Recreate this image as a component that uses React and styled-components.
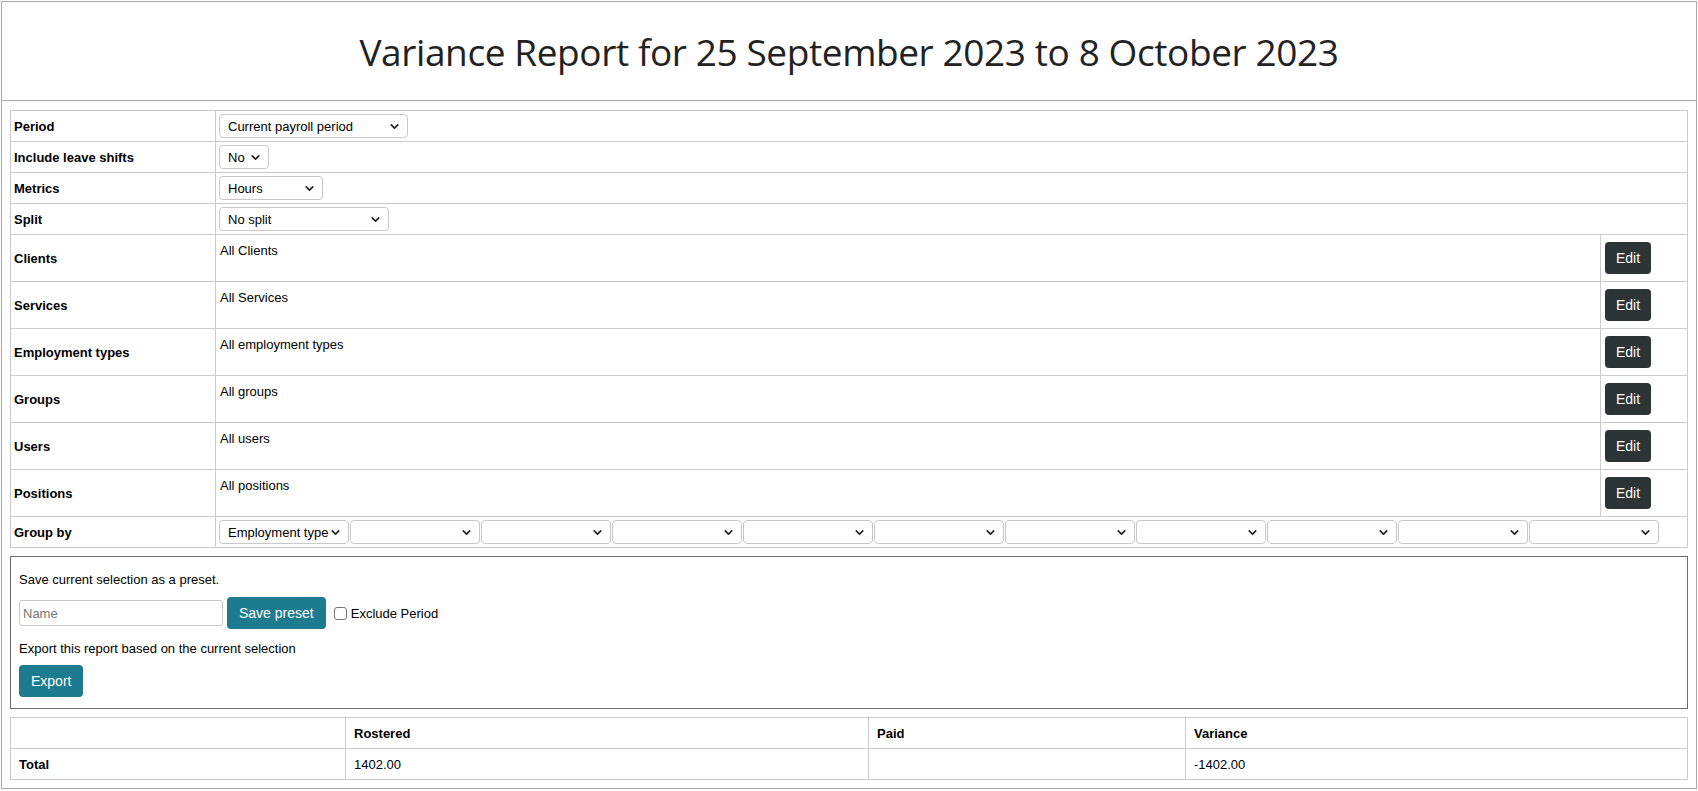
import React from "react";
import styled, { createGlobalStyle } from "styled-components";
import { ChevronDown } from "lucide-react";

const GlobalStyle = createGlobalStyle`
  body {
    margin: 0;
    font-family: "Liberation Sans", Arial, sans-serif;
    font-size: 13px;
    color: #000;
    background: #fff;
  }
`;

const Frame = styled.div`
  margin: 1px;
  border: 1px solid #a9a9a9;
`;

const Header = styled.div`
  height: 98px;
  border-bottom: 1px solid #a9a9a9;
  display: flex;
  align-items: center;
  justify-content: center;
`;

const Title = styled.h1`
  margin: 0;
  font-family: "Open Sans", sans-serif;
  font-weight: 400;
  font-size: 37px;
  letter-spacing: -0.4px;
  color: #222;
`;

const Content = styled.div`
  padding: 9px 8px 8px;
  display: flex;
  flex-direction: column;
  gap: 8px;
`;

const Table = styled.table`
  width: 100%;
  border-collapse: collapse;
  table-layout: fixed;
`;

const Cell = styled.td`
  border: 1px solid #ccc;
  padding: ${props => props.pad || "3px"};
  vertical-align: ${props => (props.top ? "top" : "middle")};
  font-weight: ${props => (props.bold ? 700 : 400)};
  line-height: 15px;
`;

const SelectWrap = styled.span`
  position: relative;
  display: inline-block;
  width: ${props => props.width}px;
  flex: none;
`;

const NativeSelect = styled.select`
  appearance: none;
  width: 100%;
  height: 24px;
  border: 1px solid #c8c8c8;
  border-radius: 4px;
  background: #fff;
  padding: 0 18px 0 8px;
  font-family: "Liberation Sans", Arial, sans-serif;
  font-size: 13px;
  color: #000;
  display: block;
`;

const Chevron = styled(ChevronDown)`
  position: absolute;
  right: 7px;
  top: 6px;
  pointer-events: none;
`;

const Select = ({ width, value }) => (
  <SelectWrap width={width}>
    <NativeSelect defaultValue={value}>
      <option value={value}>{value}</option>
    </NativeSelect>
    <Chevron size={13} strokeWidth={3} color="#222" />
  </SelectWrap>
);

const SelectRow = styled.div`
  display: flex;
  gap: 1px;
`;

const Button = styled.button`
  height: 32px;
  padding: 0 ${props => props.px || 12}px;
  border: none;
  border-radius: 4px;
  background: ${props => (props.dark ? "#2d3436" : "#1d7b8f")};
  color: #fff;
  font-family: "Liberation Sans", Arial, sans-serif;
  font-size: 14px;
  cursor: pointer;
`;

const PresetBox = styled.div`
  border: 1px solid #6b6b6b;
  padding: 15px 8px 11px;
`;

const Line = styled.div`
  line-height: 15px;
`;

const PresetRow = styled.div`
  display: flex;
  align-items: center;
  gap: 4px;
  margin: 10px 0 12px;
`;

const NameInput = styled.input`
  width: 204px;
  height: 26px;
  box-sizing: border-box;
  border: 1px solid #c8c8c8;
  border-radius: 3px;
  padding: 0 3px;
  font-family: "Liberation Sans", Arial, sans-serif;
  font-size: 13px;
  &::placeholder {
    color: #777;
  }
`;

const CheckLabel = styled.label`
  display: flex;
  align-items: center;
  gap: 4px;
  margin-left: 4px;
  font-size: 13px;
`;

const CheckBox = styled.input`
  appearance: none;
  width: 13px;
  height: 13px;
  margin: 0;
  border: 1px solid #767676;
  border-radius: 3px;
  background: #fff;
`;

const ExportWrap = styled.div`
  margin-top: 9px;
`;

const filters = [
  ["Clients", "All Clients"],
  ["Services", "All Services"],
  ["Employment types", "All employment types"],
  ["Groups", "All groups"],
  ["Users", "All users"],
  ["Positions", "All positions"]
];

const App = () => (
  <>
    <GlobalStyle />
    <Frame>
      <Header>
        <Title>Variance Report for 25 September 2023 to 8 October 2023</Title>
      </Header>
      <Content>
        <Table>
          <colgroup>
            <col style={{ width: 205 }} />
            <col />
            <col style={{ width: 87 }} />
          </colgroup>
          <tbody>
            <tr>
              <Cell bold>Period</Cell>
              <Cell colSpan={2}>
                <Select width={189} value="Current payroll period" />
              </Cell>
            </tr>
            <tr>
              <Cell bold>Include leave shifts</Cell>
              <Cell colSpan={2}>
                <Select width={50} value="No" />
              </Cell>
            </tr>
            <tr>
              <Cell bold>Metrics</Cell>
              <Cell colSpan={2}>
                <Select width={104} value="Hours" />
              </Cell>
            </tr>
            <tr>
              <Cell bold>Split</Cell>
              <Cell colSpan={2}>
                <Select width={170} value="No split" />
              </Cell>
            </tr>
            {filters.map(([label, value]) => (
              <tr key={label}>
                <Cell bold>{label}</Cell>
                <Cell top pad="8px 4px">{value}</Cell>
                <Cell pad="7px 4px">
                  <Button dark px={11}>Edit</Button>
                </Cell>
              </tr>
            ))}
            <tr>
              <Cell bold>Group by</Cell>
              <Cell colSpan={2}>
                <SelectRow>
                  <Select width={130} value="Employment type" />
                  {Array.from({ length: 10 }).map((_, i) => (
                    <Select key={i} width={130} value="" />
                  ))}
                </SelectRow>
              </Cell>
            </tr>
          </tbody>
        </Table>

        <PresetBox>
          <Line>Save current selection as a preset.</Line>
          <PresetRow>
            <NameInput placeholder="Name" />
            <Button>Save preset</Button>
            <CheckLabel>
              <CheckBox type="checkbox" />
              Exclude Period
            </CheckLabel>
          </PresetRow>
          <Line>Export this report based on the current selection</Line>
          <ExportWrap>
            <Button>Export</Button>
          </ExportWrap>
        </PresetBox>

        <Table>
          <colgroup>
            <col style={{ width: 335 }} />
            <col style={{ width: 523 }} />
            <col style={{ width: 317 }} />
            <col />
          </colgroup>
          <tbody>
            <tr>
              <Cell pad="8px 8px 7px"></Cell>
              <Cell pad="8px 8px 7px" bold>Rostered</Cell>
              <Cell pad="8px 8px 7px" bold>Paid</Cell>
              <Cell pad="8px 8px 7px" bold>Variance</Cell>
            </tr>
            <tr>
              <Cell pad="8px 8px 7px" bold>Total</Cell>
              <Cell pad="8px 8px 7px">1402.00</Cell>
              <Cell pad="8px 8px 7px"></Cell>
              <Cell pad="8px 8px 7px">-1402.00</Cell>
            </tr>
          </tbody>
        </Table>
      </Content>
    </Frame>
  </>
);

export default App;
